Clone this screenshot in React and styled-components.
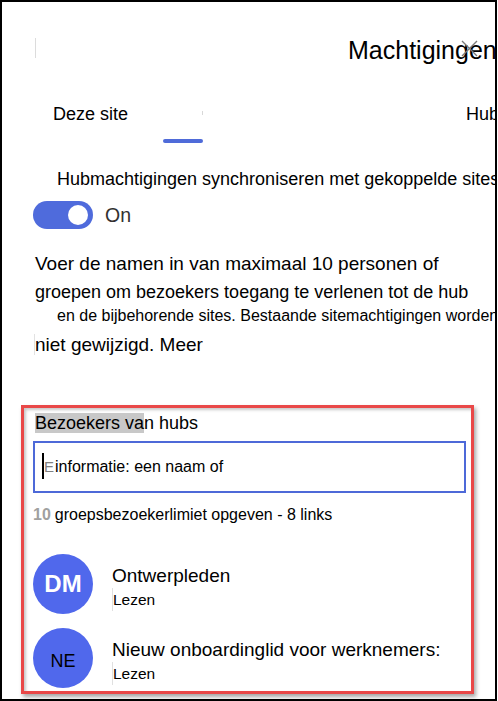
import React from 'react';
import styled, { createGlobalStyle } from 'styled-components';

const GlobalStyle = createGlobalStyle`
  html, body {
    margin: 0;
    padding: 0;
    background: #ffffff;
  }
  body {
    font-family: 'Liberation Sans', Arial, sans-serif;
    color: #000000;
  }
`;

const Frame = styled.div`
  position: relative;
  width: 497px;
  height: 701px;
  box-sizing: border-box;
  border: 2px solid #000000;
  overflow: hidden;
  background: #ffffff;
`;

const Header = styled.div`
  display: flex;
  align-items: center;
  padding: 33px 0 0 33px;
  height: 30px;
`;

const Tick = styled.div`
  width: 1px;
  height: 20px;
  flex-shrink: 0;
  background: #dcdcdc;
  margin-top: -4px;
`;

const Title = styled.h1`
  margin: 0 0 0 312px;
  font-size: 25px;
  line-height: 30px;
  font-weight: 400;
  white-space: nowrap;
  flex-shrink: 0;
`;

const CloseButton = styled.svg`
  position: absolute;
  left: 459px;
  top: 38px;
  width: 17px;
  height: 17px;
`;

const TabRow = styled.div`
  display: flex;
  align-items: flex-start;
  height: 42px;
  margin-top: 38px;
  padding-left: 51px;
`;

const Tab = styled.div`
  width: ${p => p.$width || 'auto'};
  flex-shrink: 0;
  font-size: 18px;
  line-height: 22px;
  white-space: nowrap;
  margin-left: ${p => p.$offset || 0}px;
`;

const IndicatorSlot = styled.div`
  width: 40px;
  height: 40px;
  flex-shrink: 0;
  display: flex;
  flex-direction: column;
  align-items: flex-end;
`;

const SlotTick = styled.div`
  width: 1px;
  height: 4px;
  margin-top: 8px;
  background: #d8d8d8;
`;

const Indicator = styled.div`
  width: 40px;
  height: 4px;
  margin-top: auto;
  border-radius: 2px;
  background: #4f6bd9;
`;

const Line = styled.div`
  font-size: ${p => p.$size}px;
  line-height: ${p => p.$lh}px;
  margin-top: ${p => p.$mt}px;
  padding-left: ${p => p.$indent}px;
  white-space: nowrap;
`;

const FaintStart = styled.span`
  border-left: 1px solid #e2e2e2;
`;

const ToggleRow = styled.div`
  display: flex;
  align-items: center;
  gap: 12px;
  margin-top: 11px;
  padding-left: 31px;
  height: 28px;
`;

const Switch = styled.div`
  width: 60px;
  height: 28px;
  box-sizing: border-box;
  border-radius: 14px;
  background: #4f6bdc;
  display: flex;
  align-items: center;
  justify-content: flex-end;
  padding-right: 5px;
`;

const Knob = styled.div`
  width: 20px;
  height: 20px;
  border-radius: 50%;
  background: #ffffff;
`;

const SwitchLabel = styled.span`
  font-size: 19.5px;
  color: #323130;
`;

const Panel = styled.section`
  margin: 48px 0 0 19px;
  width: 453px;
  height: 289px;
  box-sizing: border-box;
  border: 3px solid #e94848;
  box-shadow: 2px 3px 4px rgba(0, 0, 0, 0.35), inset 2px 2px 3px rgba(0, 0, 0, 0.22);
  padding-top: 3px;
`;

const PanelLabel = styled.div`
  font-size: 18px;
  line-height: 24px;
  padding-left: 11px;
`;

const Highlight = styled.span`
  background: #c8c8c8;
`;

const InputBox = styled.div`
  position: relative;
  margin: 6px 0 0 9px;
  width: 433px;
  height: 52px;
  box-sizing: border-box;
  border: 2px solid #4d69d8;
  display: flex;
  align-items: baseline;
  padding: 10px 0 0 9px;
  line-height: 27px;
`;

const Caret = styled.div`
  position: absolute;
  left: 7px;
  top: 10px;
  width: 2px;
  height: 26px;
  background: #000000;
`;

const GhostLetter = styled.span`
  font-size: 15px;
  color: #808080;
`;

const InputText = styled.span`
  margin-left: 1px;
  font-size: 16px;
  white-space: nowrap;
`;

const LimitRow = styled.div`
  display: flex;
  align-items: baseline;
  gap: 4px;
  margin-top: 11px;
  padding-left: 9px;
  font-size: 16px;
  line-height: 22px;
`;

const LimitCount = styled.span`
  font-weight: 700;
  color: #a0a0a0;
`;

const People = styled.div`
  display: flex;
  flex-direction: column;
  gap: 14px;
  margin-top: 28px;
  padding-left: 9px;
`;

const PersonRow = styled.div`
  display: flex;
  align-items: flex-start;
  gap: 19px;
`;

const Avatar = styled.div`
  width: 60px;
  height: 60px;
  flex-shrink: 0;
  border-radius: 50%;
  background: #5068ec;
  display: flex;
  align-items: center;
  justify-content: center;
  font-size: ${p => (p.$bold ? 24 : 18)}px;
  font-weight: ${p => (p.$bold ? 700 : 400)};
  color: ${p => (p.$bold ? '#ffffff' : '#000000')};
  padding-top: ${p => (p.$bold ? 0 : 6)}px;
  box-sizing: border-box;
`;

const PersonText = styled.div`
  padding-top: 10px;
  display: flex;
  flex-direction: column;
  align-items: flex-start;
`;

const PersonName = styled.div`
  font-size: 19px;
  line-height: 23px;
  white-space: nowrap;
`;

const PersonRole = styled.div`
  font-size: 15.5px;
  line-height: 23px;
  border-left: 1px solid #e0e0e0;
  margin-top: 1px;
`;

const people = [
  { initials: 'DM', bold: true, name: 'Ontwerpleden', role: 'Lezen' },
  { initials: 'NE', bold: false, name: 'Nieuw onboardinglid voor werknemers:', role: 'Lezen' },
];

export default function App() {
  return (
    <>
      <GlobalStyle />
      <Frame>
        <Header>
          <Tick />
          <Title>Machtigingen</Title>
        </Header>
        <CloseButton viewBox="0 0 17 17" aria-label="Sluiten">
          <path d="M1 1 L16 16 M16 1 L1 16" stroke="#7a7a7a" strokeWidth="1.4" fill="none" />
        </CloseButton>

        <TabRow>
          <Tab $width="110px">Deze site</Tab>
          <IndicatorSlot>
            <SlotTick />
            <Indicator />
          </IndicatorSlot>
          <Tab $offset={263}>Hub</Tab>
        </TabRow>

        <Line $size={18} $lh={22} $mt={23} $indent={55}>
          Hubmachtigingen synchroniseren met gekoppelde sites
        </Line>

        <ToggleRow>
          <Switch>
            <Knob />
          </Switch>
          <SwitchLabel>On</SwitchLabel>
        </ToggleRow>

        <Line $size={19} $lh={24} $mt={23} $indent={33}>
          Voer de namen in van maximaal 10 personen of
        </Line>
        <Line $size={18} $lh={22} $mt={5} $indent={33}>
          groepen om bezoekers toegang te verlenen tot de hub
        </Line>
        <Line $size={16} $lh={20} $mt={3} $indent={55}>
          en de bijbehorende sites. Bestaande sitemachtigingen worden
        </Line>
        <Line $size={19} $lh={24} $mt={7} $indent={32}>
          <FaintStart>niet gewijzigd. Meer</FaintStart>
        </Line>

        <Panel>
          <PanelLabel>
            <Highlight>Bezoekers va</Highlight>n hubs
          </PanelLabel>
          <InputBox>
            <Caret />
            <GhostLetter>E</GhostLetter>
            <InputText>informatie: een naam of</InputText>
          </InputBox>
          <LimitRow>
            <LimitCount>10</LimitCount>
            <span>groepsbezoekerlimiet opgeven - 8 links</span>
          </LimitRow>
          <People>
            {people.map(p => (
              <PersonRow key={p.initials}>
                <Avatar $bold={p.bold}>{p.initials}</Avatar>
                <PersonText>
                  <PersonName>{p.name}</PersonName>
                  <PersonRole>{p.role}</PersonRole>
                </PersonText>
              </PersonRow>
            ))}
          </People>
        </Panel>
      </Frame>
    </>
  );
}
